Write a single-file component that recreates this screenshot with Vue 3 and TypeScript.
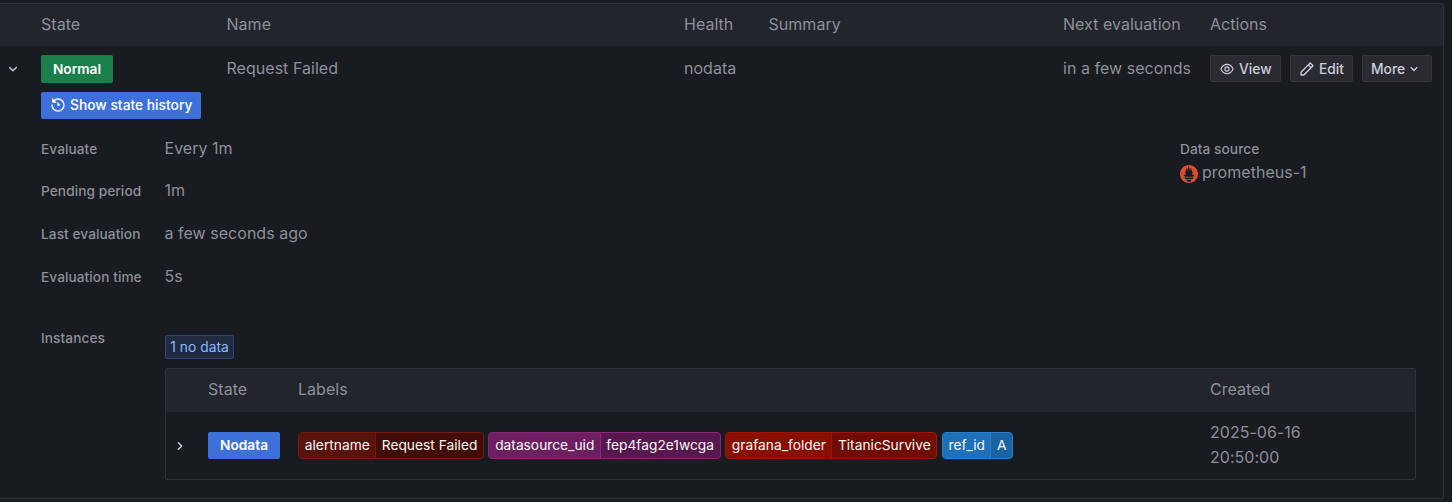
<script setup lang="ts">
interface Field {
  label: string
  value: string
}

interface Tag {
  name: string
  value: string
  tone: string
}

const columns: string[] = ['', 'State', 'Name', 'Health', 'Summary', 'Next evaluation', 'Actions']

const fields: Field[] = [
  { label: 'Evaluate', value: 'Every 1m' },
  { label: 'Pending period', value: '1m' },
  { label: 'Last evaluation', value: 'a few seconds ago' },
  { label: 'Evaluation time', value: '5s' },
]

const tags: Tag[] = [
  { name: 'alertname', value: 'Request Failed', tone: 'maroon' },
  { name: 'datasource_uid', value: 'fep4fag2e1wcga', tone: 'purple' },
  { name: 'grafana_folder', value: 'TitanicSurvive', tone: 'red' },
  { name: 'ref_id', value: 'A', tone: 'blue' },
]
</script>

<template>
  <main class="page">
    <section class="rules">
      <div class="grid head">
        <span v-for="c in columns" :key="c">{{ c }}</span>
      </div>

      <div class="grid rule">
        <svg class="chevron" viewBox="0 0 16 16"><path d="M4.7 6.4 8 9.7l3.3-3.3" /></svg>
        <span><span class="badge green">Normal</span></span>
        <span class="cell">Request Failed</span>
        <span class="cell">nodata</span>
        <span></span>
        <span class="cell">in a few seconds</span>
        <span class="actions">
          <button class="btn view">
            <svg class="eye" viewBox="0 0 16 16">
              <path d="M1.900 8C3.200 5 5.500 3.300 8 3.300S12.800 5 14.100 8C12.800 11 10.500 12.700 8 12.700S3.200 11 1.900 8Z" />
              <circle cx="8" cy="8" r="2.100" />
            </svg>
            View
          </button>
          <button class="btn edit">
            <svg viewBox="0 0 24 24"><path d="M22 7.24a1 1 0 0 0-.29-.71l-4.24-4.24a1 1 0 0 0-1.42 0l-2.83 2.83L2.29 16.05a1 1 0 0 0-.29.71V21a1 1 0 0 0 1 1h4.24a1 1 0 0 0 .76-.29l10.87-10.93L21.71 8a1 1 0 0 0 .29-.76ZM6.83 20H4v-2.83l9.93-9.93 2.83 2.83L6.83 20ZM18.17 8.66l-2.83-2.83 1.42-1.41 2.82 2.82-1.41 1.42Z" /></svg>
            Edit
          </button>
          <button class="btn more">
            More
            <svg viewBox="0 0 24 24"><path d="M17 9.17a1 1 0 0 0-1.41 0L12 12.71 8.46 9.17a1 1 0 1 0-1.41 1.42l4.24 4.24a1 1 0 0 0 1.42 0L17 10.59a1 1 0 0 0 0-1.42Z" /></svg>
          </button>
        </span>
      </div>

      <div class="details">
        <button class="history">
          <svg viewBox="0 0 24 24"><path d="M12 2a10 10 0 0 0-6.880 2.770V3a1 1 0 0 0-2 0v4.500a1 1 0 0 0 1 1h4.500a1 1 0 0 0 0-2H6.220A8 8 0 1 1 4 12a1 1 0 0 0-2 0A10 10 0 1 0 12 2Zm0 6a1 1 0 0 0-1 1v3a1 1 0 0 0 1 1h2a1 1 0 0 0 0-2h-1V9a1 1 0 0 0-1-1Z" /></svg>
          Show state history
        </button>

        <div class="info">
          <dl class="fields">
            <div v-for="f in fields" :key="f.label" class="field">
              <dt>{{ f.label }}</dt>
              <dd>{{ f.value }}</dd>
            </div>
          </dl>
          <div class="source">
            <span class="label">Data source</span>
            <span class="source-name">
              <svg viewBox="0 0 24 24">
                <path fill="#de4e31" d="M12 0C5.373 0 0 5.372 0 12c0 6.627 5.373 12 12 12s12-5.373 12-12c0-6.628-5.373-12-12-12zm0 22.460c-1.885 0-3.414-1.260-3.414-2.814h6.828c0 1.553-1.528 2.813-3.414 2.813zm5.640-3.745H6.360v-2.046h11.280v2.046zm-.040-3.098H6.391c-.037-.043-.075-.086-.111-.130-1.155-1.401-1.427-2.133-1.690-2.879-.005-.025 1.400.287 2.395.511 0 0 .513.119 1.262.255-.720-.843-1.147-1.915-1.147-3.010 0-2.406 1.845-4.508 1.180-6.207.648.053 1.340 1.367 1.387 3.422.689-.951.977-2.690.977-3.755 0-1.103.727-2.385 1.454-2.429-.648 1.069.168 1.984.894 4.256.272.854.237 2.290.447 3.201.070-1.892.395-4.652 1.595-5.605-.529 1.200.079 2.702.494 3.424.671 1.164 1.078 2.047 1.078 3.716a4.642 4.642 0 0 1-1.110 2.996c.792-.149 1.340-.283 1.340-.283l2.573-.502s-.374 1.538-1.810 3.019z" />
              </svg>
              <span>prometheus-1</span>
            </span>
          </div>
        </div>

        <div class="instances">
          <span class="label">Instances</span>
          <div class="instances-body">
            <span class="count">1 no data</span>
            <div class="table">
              <div class="igrid ihead">
                <span></span><span>State</span><span>Labels</span><span>Created</span>
              </div>
              <div class="igrid irow">
                <svg class="chevron" viewBox="0 0 16 16"><path d="M6.400 4.700 9.700 8l-3.300 3.300" /></svg>
                <span><span class="badge blue-badge">Nodata</span></span>
                <span class="tags">
                  <span v-for="t in tags" :key="t.name" class="tag" :class="t.tone">
                    <span class="key">{{ t.name }}</span><span class="val">{{ t.value }}</span>
                  </span>
                </span>
                <span class="created">2025-06-16 20:50:00</span>
              </div>
            </div>
          </div>
        </div>
      </div>
    </section>
  </main>
</template>

<style>
body {
  background: #181b1f;
}
</style>

<style scoped>
* {
  box-sizing: border-box;
}
.page {
  height: 502px;
  overflow: hidden;
  padding: 3px 8px 0 0;
  background: #181b1f;
  color: #8e8f9a;
  font: 400 16px/25px Inter, sans-serif;
  letter-spacing: 0.03px;
}
.rules {
  height: 496px;
  border: solid #2e3136;
  border-width: 1px 1px 1px 0;
  border-radius: 0 2px 2px 0;
}
.grid {
  display: grid;
  grid-template-columns: 41px 185.5px 457.5px 84.5px 294.5px 147px 1fr;
  align-items: center;
  white-space: nowrap;
}
.head {
  height: 42px;
  padding-bottom: 2px;
  background: #22252b;
}
.rule {
  height: 46px;
}
.cell {
  padding-bottom: 2px;
}
.chevron {
  width: 16px;
  height: 16px;
  margin-left: 5px;
  fill: none;
  stroke: #ccccdc;
  stroke-width: 1.4;
  stroke-linecap: round;
  stroke-linejoin: round;
}
.badge {
  display: flex;
  align-items: center;
  justify-content: center;
  width: 72px;
  height: 28px;
  border-radius: 2px;
  color: #fff;
  font-size: 13.7px;
  font-weight: 600;
}
.green {
  background: #1a7f4b;
}
.blue-badge {
  height: 27px;
  padding-bottom: 1px;
  background: #3d71d9;
}
.actions {
  display: flex;
  gap: 9px;
  padding-bottom: 1px;
}
.btn {
  display: flex;
  align-items: center;
  gap: 4px;
  height: 27px;
  padding: 1px 8px 0;
  border: 1px solid #35363c;
  border-radius: 2px;
  background: #2a2b30;
  color: #ccccdc;
  font: 500 13.8px/20px Inter, sans-serif;
  white-space: nowrap;
}
.btn svg,
.history svg {
  flex: none;
  width: 16px;
  height: 16px;
  fill: currentColor;
}
.btn .eye {
  fill: none;
  stroke: currentColor;
  stroke-width: 1.15;
  stroke-linejoin: round;
}
.view {
  width: 71px;
}
.edit {
  width: 63px;
}
.more {
  width: 70px;
  gap: 1px;
}
.history {
  display: flex;
  align-items: center;
  gap: 4px;
  width: 160px;
  height: 27px;
  padding: 0 9px 1px;
  border: 0;
  border-radius: 2px;
  background: #3d71d9;
  color: #fff;
  font: 500 13.8px/20px Inter, sans-serif;
  white-space: nowrap;
}
.details {
  padding: 0 27px 0 41px;
}
.info {
  display: flex;
  justify-content: space-between;
  height: 203px;
  padding-top: 17px;
}
.fields {
  display: flex;
  flex-direction: column;
  gap: 17.7px;
  margin: 0;
}
.field {
  display: flex;
  align-items: center;
  height: 25px;
}
dt,
.label {
  width: 124px;
  flex: none;
  font-size: 13.7px;
  font-weight: 500;
  letter-spacing: 0.06px;
}
dt {
  width: 123.5px;
  padding-top: 1px;
}
dd {
  margin: 0;
}
.field:nth-child(2) dd {
  padding-bottom: 1px;
}
.source {
  display: flex;
  flex-direction: column;
  width: 236px;
}
.source .label {
  padding-top: 1px;
}
.source-name {
  display: flex;
  align-items: center;
  gap: 4px;
  height: 21px;
}
.source-name span {
  padding-bottom: 1px;
}
.source-name svg {
  width: 18px;
  height: 18px;
  margin-top: 2px;
}
.instances {
  display: flex;
  align-items: flex-start;
  padding-top: 4px;
}
.instances-body {
  flex: 1;
  padding-top: 9px;
}
.count {
  display: block;
  width: 69px;
  height: 24px;
  border: 1px solid #2c4674;
  border-radius: 2px;
  background: #202b3f;
  color: #8ab8ff;
  font-size: 13.8px;
  line-height: 22px;
  text-align: center;
  white-space: nowrap;
}
.table {
  height: 112px;
  margin-top: 9px;
  border: 1px solid #2e3136;
  border-radius: 2px;
}
.igrid {
  display: grid;
  grid-template-columns: 42px 90px 912px 1fr;
  align-items: center;
}
.ihead {
  height: 43px;
  padding-bottom: 2px;
  background: #22252b;
}
.irow {
  height: 67px;
}
.irow .chevron {
  margin-left: 6px;
}
.tags {
  display: flex;
  gap: 4.5px;
}
.tag {
  display: flex;
  height: 27px;
  border: 1px solid;
  border-radius: 4px;
  overflow: hidden;
  color: #f7f7f9;
  font-size: 13.75px;
  line-height: 24px;
  letter-spacing: 0.01px;
  white-space: nowrap;
}
.key {
  padding: 0 5.5px 0 5.8px;
  border-right: 1px solid;
  border-color: inherit;
}
.val {
  padding: 0 5.5px;
}
.maroon {
  background: #430d07;
  border-color: #731910;
}
.maroon .key {
  background: #58140c;
}
.purple {
  background: #57184f;
  border-color: #88267c;
}
.purple .key {
  background: #6d1f62;
}
.red {
  background: #700c00;
  border-color: #a31305;
}
.red .key {
  background: #890f02;
}
.blue {
  background: #1b62a1;
  border-color: #2580cf;
}
.blue .key {
  background: #1f70b8;
}
.created {
  width: 100px;
  padding-bottom: 2px;
}
</style>
